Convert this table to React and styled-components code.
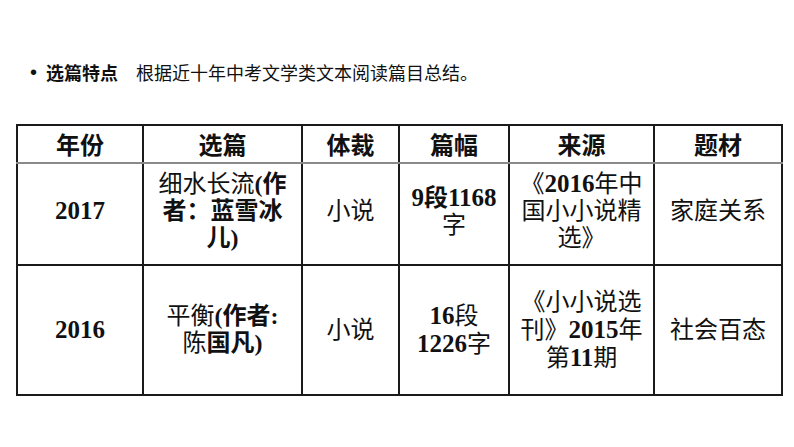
import React from 'react';
import styled, { createGlobalStyle } from 'styled-components';

const GlobalStyle = createGlobalStyle`
  html, body {
    margin: 0;
    padding: 0;
    background: #ffffff;
  }
  body {
    width: 794px;
    height: 447px;
    overflow: hidden;
    font-family: "Liberation Serif", "Noto Sans CJK SC", serif;
    color: #111111;
  }
`;

const Page = styled.div`
  padding: 61px 0 0 16px;
`;

const Intro = styled.div`
  display: flex;
  align-items: center;
  height: 22px;
  padding-left: 14px;
  font-family: "Noto Sans CJK SC", sans-serif;
  font-size: 18px;
  line-height: 22px;
  color: #111111;
`;

const Bullet = styled.span`
  font-family: "Liberation Sans", sans-serif;
  font-size: 20px;
  margin-right: 9px;
`;

const Label = styled.span`
  font-weight: 700;
  margin-right: 18px;
`;

const Table = styled.table`
  margin-top: 41px;
  border-collapse: collapse;
  table-layout: fixed;
  width: 766px;
`;

const Head = styled.th`
  height: 36px;
  padding: 0;
  border: 2px solid #1a1a1a;
  border-bottom-color: #8a8a8a;
  font-family: "Noto Sans CJK SC", sans-serif;
  font-size: 24px;
  font-weight: 700;
  line-height: 28px;
  text-align: center;
  vertical-align: middle;
`;

const Cell = styled.td`
  height: ${(p) => p.$h}px;
  padding: 0 4px ${(p) => p.$pb || 0}px;
  border: 2px solid #1a1a1a;
  font-size: 24px;
  line-height: ${(p) => p.$lh || 26}px;
  text-align: center;
  vertical-align: middle;
  font-weight: ${(p) => (p.$bold ? 700 : 400)};
`;

const B = styled.b`
  font-weight: 700;
`;

const Num = styled.b`
  font-weight: 700;
  font-size: 25px;
`;

const cols = [126, 159, 97, 110, 145, 128];
const heads = ['年份', '选篇', '体裁', '篇幅', '来源', '题材'];

export default function App() {
  return (
    <>
      <GlobalStyle />
      <Page>
        <Intro>
          <Bullet>•</Bullet>
          <Label>选篇特点</Label>
          根据近十年中考文学类文本阅读篇目总结。
        </Intro>
        <Table>
          <colgroup>
            {cols.map((w, i) => (
              <col key={i} style={{ width: w }} />
            ))}
          </colgroup>
          <thead>
            <tr>
              {heads.map((h) => (
                <Head key={h}>{h}</Head>
              ))}
            </tr>
          </thead>
          <tbody>
            <tr>
              <Cell $h={94} $pb={6} $lh={27}><Num>2017</Num></Cell>
              <Cell $h={94} $pb={6} $lh={27}>
                细水长流<B>(作</B>
                <br />
                <B>者：蓝雪冰</B>
                <br />
                <B>儿)</B>
              </Cell>
              <Cell $h={94} $pb={6} $lh={27}>小说</Cell>
              <Cell $h={94} $pb={6} $lh={27}>
                <Num>9</Num><B>段</B><Num>1168</Num>
                <br />字
              </Cell>
              <Cell $h={94} $pb={6} $lh={27}>
                《<Num>2016</Num>年中
                <br />
                国小小说精
                <br />
                选》
              </Cell>
              <Cell $h={94} $pb={6} $lh={27}>家庭关系</Cell>
            </tr>
            <tr>
              <Cell $h={128} $lh={27}><Num>2016</Num></Cell>
              <Cell $h={128} $lh={27}>
                平衡<B>(作者:</B>
                <br />
                陈<B>国凡)</B>
              </Cell>
              <Cell $h={128} $lh={27}>小说</Cell>
              <Cell $h={128} $lh={27}>
                <Num>16</Num>段
                <br />
                <Num>1226</Num>字
              </Cell>
              <Cell $h={128} $lh={27}>
                《小小说选
                <br />
                刊》<Num>2015</Num>年
                <br />
                第<Num>11</Num>期
              </Cell>
              <Cell $h={128} $lh={27}>社会百态</Cell>
            </tr>
          </tbody>
        </Table>
      </Page>
    </>
  );
}
